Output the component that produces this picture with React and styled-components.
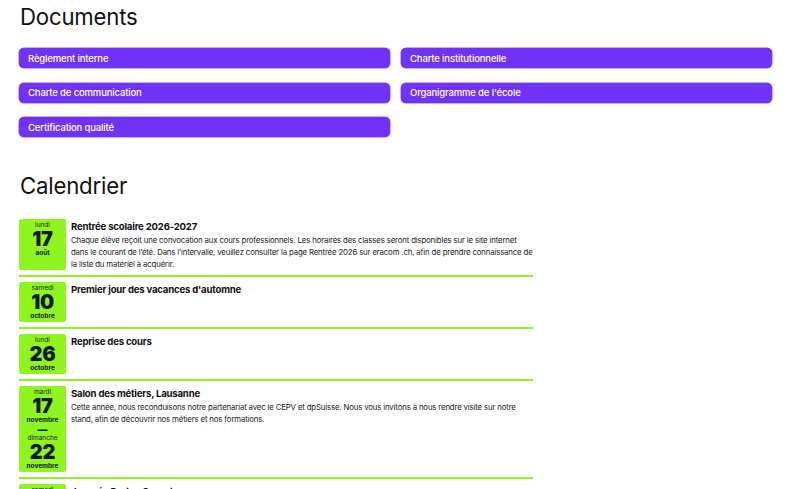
import React from 'react'
import styled, { createGlobalStyle } from 'styled-components'

const GlobalStyle = createGlobalStyle`
  html, body {
    margin: 0;
    padding: 0;
    background: #fff;
  }
  body {
    font-family: Inter, "Noto Sans", "Liberation Sans", sans-serif;
    color: #111;
    -webkit-font-smoothing: antialiased;
  }
`

const documents = [
  'Règlement interne',
  'Charte institutionnelle',
  'Charte de communication',
  "Organigramme de l'école",
  'Certification qualité',
]

const events = [
  {
    days: [{ name: 'lundi', num: '17', month: 'août' }],
    title: 'Rentrée scolaire 2026-2027',
    text: 'Chaque élève reçoit une convocation aux cours professionnels. Les horaires des classes seront disponibles sur le site inter\u00ADnet dans le courant de l\u2019été. Dans l\u2019intervalle, veuillez consulter la page Rentrée 2026 sur eracom .ch, afin de prendre connais\u00ADsance de la liste du matériel à acquérir.',
  },
  {
    days: [{ name: 'samedi', num: '10', month: 'octobre' }],
    title: "Premier jour des vacances d'automne",
  },
  {
    days: [{ name: 'lundi', num: '26', month: 'octobre' }],
    title: 'Reprise des cours',
  },
  {
    days: [
      { name: 'mardi', num: '17', month: 'novembre' },
      { name: 'dimanche', num: '22', month: 'novembre' },
    ],
    title: 'Salon des métiers, Lausanne',
    text: 'Cette année, nous reconduisons notre partenariat avec le CEPV et dpSuisse. Nous vous invitons à nous rendre visite sur notre stand, afin de découvrir nos métiers et nos formations.',
  },
  {
    days: [{ name: 'samedi', num: '28', month: 'novembre' }],
    title: 'Journée Portes Ouvertes',
  },
]

export default function App() {
  return (
    <Page>
      <GlobalStyle />
      <Heading>Documents</Heading>
      <DocGrid>
        {documents.map((d) => (
          <DocButton key={d}>{d}</DocButton>
        ))}
      </DocGrid>

      <Heading $top={36}>Calendrier</Heading>
      <EventList>
        {events.map((ev) => (
          <EventRow key={ev.title}>
            <DateBox>
              {ev.days.map((day, i) => (
                <React.Fragment key={i}>
                  {i > 0 && <Dash>—</Dash>}
                  <DayName>{day.name}</DayName>
                  <DayNum>{day.num}</DayNum>
                  <Month>{day.month}</Month>
                </React.Fragment>
              ))}
            </DateBox>
            <EventBody>
              <EventTitle>{ev.title}</EventTitle>
              {ev.text && <EventText>{ev.text}</EventText>}
            </EventBody>
          </EventRow>
        ))}
      </EventList>
    </Page>
  )
}

const Page = styled.main`
  padding: 0 28px 0 19px;
  height: 489px;
  overflow: hidden;
`

const Heading = styled.h2`
  margin: ${(p) => p.$top || 4}px 0 0 1px;
  font-size: 22.2px;
  font-weight: 400;
  line-height: 26px;
  letter-spacing: -0.2px;
  color: #111;
`

const DocGrid = styled.div`
  display: grid;
  grid-template-columns: 371px 371px;
  column-gap: 11px;
  row-gap: 14.5px;
  margin-top: 18px;
`

const DocButton = styled.a`
  display: flex;
  align-items: center;
  height: 20px;
  padding: 0 9px;
  background: #7033f5;
  color: #fff;
  border-radius: 5px;
  font-size: 9.5px;
  font-weight: 500;
  letter-spacing: -0.15px;
  box-shadow: 0 0 0 0.5px #8a5af7;
  cursor: pointer;
`

const EventList = styled.div`
  margin-top: 20px;
  width: 514px;
`

const EventRow = styled.div`
  display: flex;
  gap: 5px;
  padding: 5px 0;
  border-bottom: 2px solid #8ef51f;
  &:first-child {
    padding-top: 0;
  }
`

const DateBox = styled.div`
  flex: 0 0 47px;
  min-height: 40px;
  box-sizing: border-box;
  padding: 2px 0 1px;
  background: #8ef51f;
  border-radius: 2px;
  display: flex;
  flex-direction: column;
  align-items: center;
  color: #121a1f;
`

const DayName = styled.span`
  font-size: 6.5px;
  line-height: 9px;
  font-weight: 400;
`

const DayNum = styled.span`
  font-size: 20px;
  line-height: 19px;
  font-weight: 900;
  letter-spacing: -0.3px;
`

const Month = styled.span`
  font-size: 6.5px;
  line-height: 9px;
  font-weight: 700;
`

const Dash = styled.span`
  font-size: 10px;
  line-height: 9px;
  font-weight: 900;
`

const EventBody = styled.div`
  flex: 1;
  min-width: 0;
`

const EventTitle = styled.h3`
  margin: 2px 0 1px;
  font-size: 9.6px;
  line-height: 12px;
  font-weight: 700;
  letter-spacing: -0.2px;
  color: #111;
`

const EventText = styled.p`
  margin: 0;
  font-size: 7.8px;
  line-height: 12px;
  letter-spacing: -0.15px;
  color: #222;
  hyphens: manual;
`
